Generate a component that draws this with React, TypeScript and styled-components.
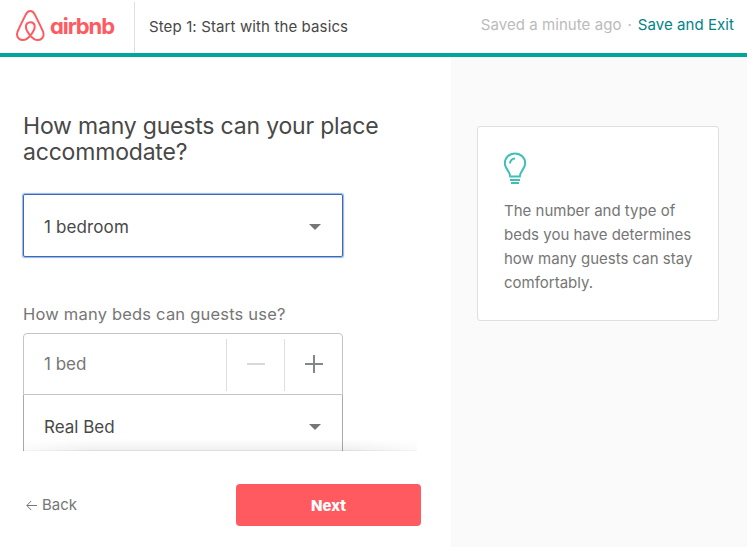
import React from 'react';
import styled, { createGlobalStyle } from 'styled-components';

const GlobalStyle = createGlobalStyle`
  *, *::before, *::after { box-sizing: border-box; }
  body {
    margin: 0;
    background: #fff;
    color: #484848;
    font-family: Inter, "Liberation Sans", sans-serif;
    overflow: hidden;
  }
  h1, p { margin: 0; font-weight: 400; }
  svg { display: block; flex: none; }
`;

const Page = styled.div`
  display: flex;
  flex-direction: column;
  width: 747px;
  height: 547px;
`;

const Header = styled.header`
  display: flex;
  height: 57px;
  border-bottom: 4px solid #00a699;
`;

const Brand = styled.a`
  display: flex;
  width: 134px;
  padding: 10px 0 0 16px;
  color: #ff5a5f;
`;

const Wordmark = styled.span`
  margin: 0 0 0 5px;
  font-size: 22px;
  line-height: 32px;
  font-weight: 700;
  letter-spacing: -1.1px;
  font-feature-settings: "cv11";
`;

const StepTitle = styled.div`
  margin-top: 2px;
  padding: 13px 0 0 14px;
  border-left: 1px solid #dce0e0;
  font-size: 15px;
  line-height: 24px;
  letter-spacing: 0.12px;
`;

const SaveStatus = styled.div`
  display: flex;
  gap: 6px;
  margin-left: auto;
  padding: 13px 13px 0 0;
  font-size: 15px;
  line-height: 24px;
  letter-spacing: 0.06px;
  color: #bbb;
`;

const SaveLink = styled.a`
  color: #008489;
`;

const Body = styled.div`
  display: flex;
  flex: 1;
  min-height: 0;
`;

const FormColumn = styled.main`
  display: flex;
  flex-direction: column;
  width: 451px;
`;

const Questions = styled.section`
  position: relative;
  height: 394px;
  padding: 56px 0 0 23px;
  overflow: hidden;
`;

const ScrollShade = styled.div`
  position: absolute;
  left: 23px;
  bottom: 0;
  width: 394px;
  height: 12px;
  border-bottom: 1px solid rgba(0, 0, 0, 0.13);
  background: linear-gradient(transparent, rgba(0, 0, 0, 0.06));
  mask-image: linear-gradient(90deg, rgba(0, 0, 0, 0.3), #000 18%, #000 82%, rgba(0, 0, 0, 0.3));
`;

const Title = styled.h1`
  font-size: 23px;
  line-height: 26px;
  letter-spacing: -0.19px;
`;

const Label = styled.p`
  margin-top: 45px;
  font-size: 16.5px;
  line-height: 24px;
  letter-spacing: 0.2px;
  color: #767676;
`;

const Select = styled.div<{ $focused?: boolean }>`
  display: flex;
  align-items: center;
  justify-content: space-between;
  width: 320px;
  height: ${p => (p.$focused ? 63 : 64)}px;
  margin-top: ${p => (p.$focused ? 29 : 0)}px;
  padding: ${p => (p.$focused ? '3px 21px 0 20px' : '1px 21px 0 20px')};
  border: 1px solid ${p => (p.$focused ? '#4168ae' : '#aaa')};
  border-top-width: ${p => (p.$focused ? 1 : 0)}px;
  border-radius: ${p => (p.$focused ? 2 : 0)}px;
  box-shadow: ${p => (p.$focused ? '0 0 1px 0.5px #8fb6f5' : 'none')};
  font-size: 17px;
  line-height: 24px;
  letter-spacing: ${p => (p.$focused ? 0.12 : 0)}px;
`;

const Stepper = styled.div`
  display: flex;
  width: 320px;
  height: 62px;
  margin-top: 7px;
  border: 1px solid #c4c4c4;
  border-radius: 4px 4px 0 0;
`;

const StepperValue = styled.div`
  flex: 1;
  padding-left: 20px;
  font-size: 17px;
  line-height: 60px;
  color: #767676;
`;

const StepperButton = styled.button`
  display: flex;
  align-items: center;
  justify-content: center;
  width: 58px;
  height: 52px;
  margin-top: 5px;
  padding: 0 0 2px;
  border: 0;
  border-left: 1px solid #dce0e0;
  background: none;
`;

const Footer = styled.footer`
  display: flex;
  justify-content: space-between;
  align-items: center;
  width: 421px;
  margin-top: 33px;
  padding-left: 26px;
`;

const BackLink = styled.a`
  display: flex;
  align-items: center;
  gap: 5px;
  font-size: 15px;
  line-height: 24px;
  color: #767676;
`;

const NextButton = styled.button`
  width: 185px;
  height: 42px;
  padding: 1px 0 0;
  border: 0;
  border-radius: 4px;
  background: #ff5a5f;
  color: #fff;
  font: 800 15px/24px Inter, sans-serif;
`;

const Aside = styled.aside`
  flex: 1;
  padding: 69px 0 0 26px;
  background: #fafafa;
`;

const TipCard = styled.div`
  width: 242px;
  height: 195px;
  padding: 25px 20px 0 26px;
  border: 1px solid #dce0e0;
  border-radius: 3px;
  background: #fff;
  color: #767676;
`;

const TipText = styled.p`
  margin-top: 14px;
  font-size: 15px;
  line-height: 24px;
  white-space: pre-line;
`;

const Belo = () => (
  <svg width="29" height="32" viewBox="0 0 29 32" fill="none" stroke="#ff5a5f" strokeWidth="2" strokeLinejoin="round">
    <path d="M14.3 25.6C11.4 22 9.9 19.2 9.9 16.7c0-2.7 1.8-4.5 4.4-4.5s4.4 1.8 4.4 4.5c0 2.500-1.500 5.300-4.400 8.900Zm0 0c-2.600 3-4.800 4.500-7.300 4.500-3.400 0-6-2.500-6-5.700 0-1.200.3-2.200 1-3.700C4 16.200 7 10 9.600 4.900 11 2.100 12.200 1 14.300 1s3.300 1.100 4.700 3.900c2.600 5.100 5.600 11.300 7.600 15.800.7 1.500 1 2.500 1 3.700 0 3.200-2.600 5.700-6 5.700-2.500 0-4.700-1.500-7.300-4.500Z" />
  </svg>
);

const Caret = () => (
  <svg width="12" height="6" viewBox="0 0 12 6" fill="#767676"><path d="M0 0h12L6 6Z" /></svg>
);

const Bulb = () => (
  <svg width="24" height="33" viewBox="0 0 24 33" fill="none" stroke="#3fbfb6" strokeWidth="2">
    <path d="M6.200 24.600C6.200 19 .8 17.200.8 11.200.8 5.600 5.400 1.400 11 1.400s10.200 4.200 10.200 9.800c0 6-5.400 7.800-5.400 13.400Z" />
    <path d="M6 11.500c0-2.900 2-4.900 5-4.900M6 28h10M7 31h8" />
  </svg>
);

export default function App() {
  return (
    <>
      <GlobalStyle />
      <Page>
        <Header>
          <Brand><Belo /><Wordmark>airbnb</Wordmark></Brand>
          <StepTitle>Step 1: Start with the basics</StepTitle>
          <SaveStatus>
            <span>Saved a minute ago</span><span>·</span><SaveLink>Save and Exit</SaveLink>
          </SaveStatus>
        </Header>
        <Body>
          <FormColumn>
            <Questions>
              <Title>How many guests can your place<br />accommodate?</Title>
              <Select $focused>1 bedroom<Caret /></Select>
              <Label>How many beds can guests use?</Label>
              <Stepper>
                <StepperValue>1 bed</StepperValue>
                <StepperButton aria-label="Remove bed">
                  <svg width="18" height="18" fill="#d8dada"><path d="M0 8h18v2H0z" /></svg>
                </StepperButton>
                <StepperButton aria-label="Add bed">
                  <svg width="18" height="18" fill="#82888a"><path d="M0 8h18v2H0zM8 0h2v18H8z" /></svg>
                </StepperButton>
              </Stepper>
              <Select>Real Bed<Caret /></Select>
              <ScrollShade />
            </Questions>
            <Footer>
              <BackLink>
                <svg width="11" height="10" fill="none" stroke="#767676"><path d="M11 5.500H1M5.200 1 .8 5.500 5.200 10" /></svg>
                Back
              </BackLink>
              <NextButton>Next</NextButton>
            </Footer>
          </FormColumn>
          <Aside>
            <TipCard>
              <Bulb />
              <TipText>{'The number and type of\nbeds you have determines\nhow many guests can stay\ncomfortably.'}</TipText>
            </TipCard>
          </Aside>
        </Body>
      </Page>
    </>
  );
}
